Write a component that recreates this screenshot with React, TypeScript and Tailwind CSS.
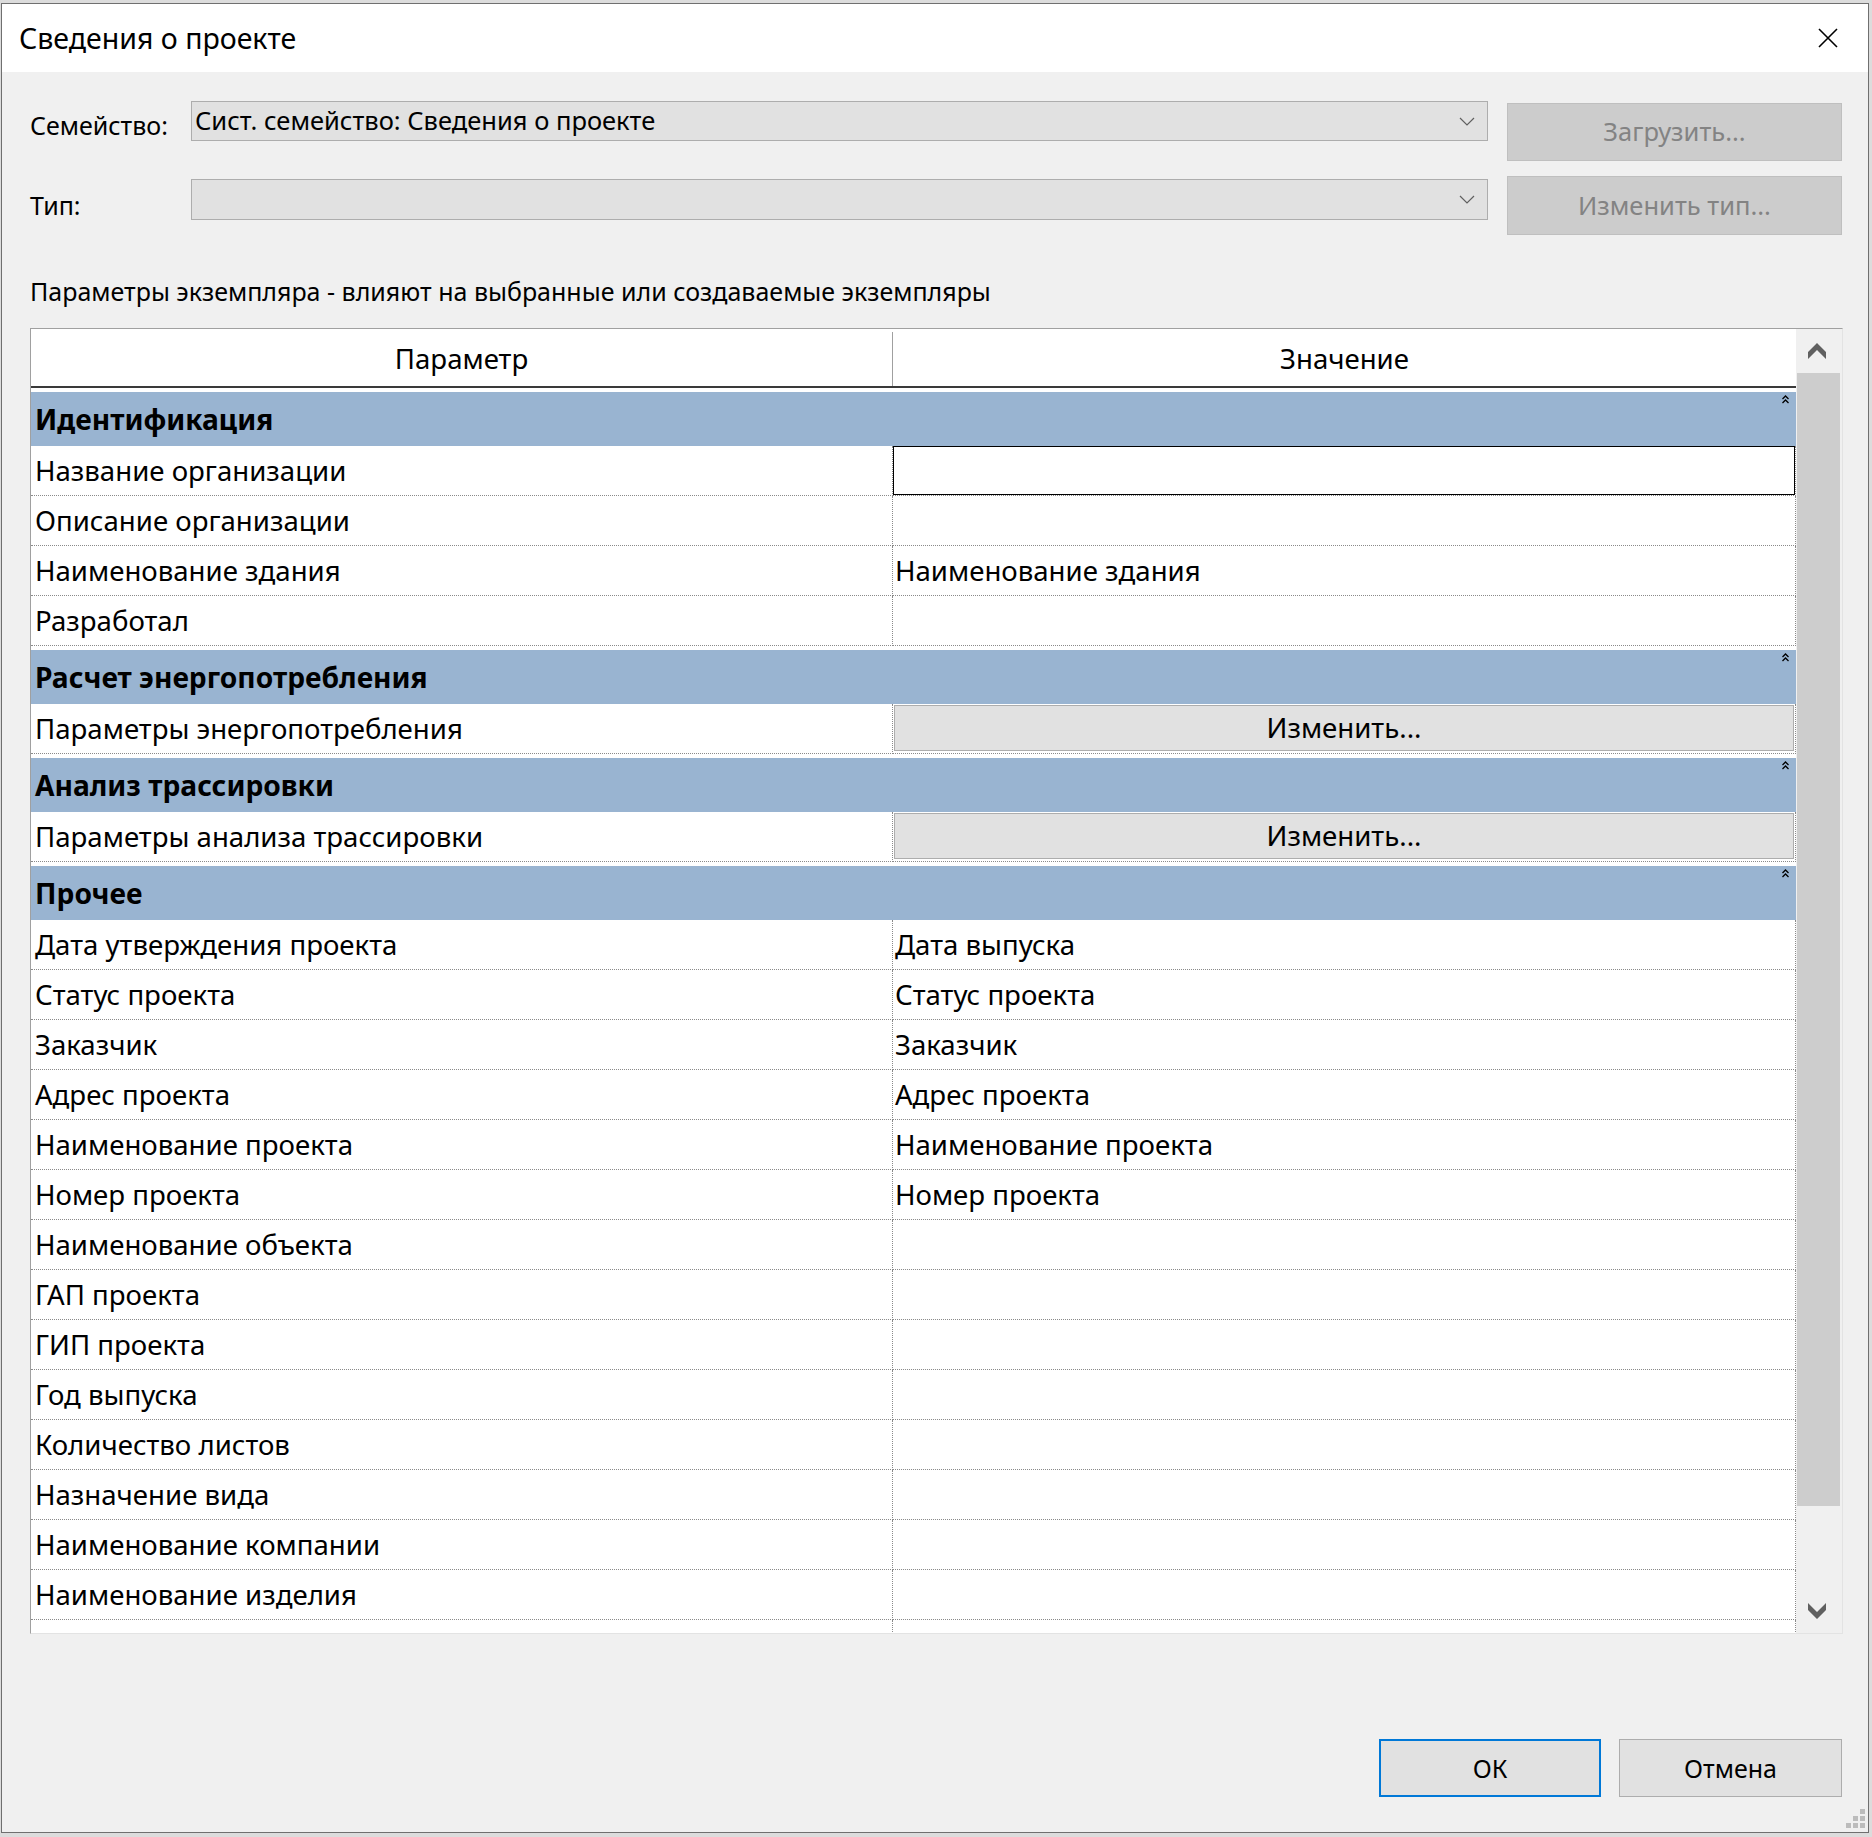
import React from 'react';

type Row = { name: string; value?: string; edit?: boolean; button?: boolean };
type Group = { title: string; rows: Row[] };

const groups: Group[] = [
  {
    title: 'Идентификация',
    rows: [
      { name: 'Название организации', edit: true },
      { name: 'Описание организации' },
      { name: 'Наименование здания', value: 'Наименование здания' },
      { name: 'Разработал' },
    ],
  },
  {
    title: 'Расчет энергопотребления',
    rows: [{ name: 'Параметры энергопотребления', button: true }],
  },
  {
    title: 'Анализ трассировки',
    rows: [{ name: 'Параметры анализа трассировки', button: true }],
  },
  {
    title: 'Прочее',
    rows: [
      { name: 'Дата утверждения проекта', value: 'Дата выпуска' },
      { name: 'Статус проекта', value: 'Статус проекта' },
      { name: 'Заказчик', value: 'Заказчик' },
      { name: 'Адрес проекта', value: 'Адрес проекта' },
      { name: 'Наименование проекта', value: 'Наименование проекта' },
      { name: 'Номер проекта', value: 'Номер проекта' },
      { name: 'Наименование объекта' },
      { name: 'ГАП проекта' },
      { name: 'ГИП проекта' },
      { name: 'Год выпуска' },
      { name: 'Количество листов' },
      { name: 'Назначение вида' },
      { name: 'Наименование компании' },
      { name: 'Наименование изделия' },
    ],
  },
];

function Chevron() {
  return (
    <svg width="16" height="9" viewBox="0 0 16 9" className="text-[#606060]">
      <path d="M1 1 L8 8 L15 1" fill="none" stroke="currentColor" strokeWidth="1.2" />
    </svg>
  );
}

function Collapse() {
  return (
    <svg width="7" height="9" viewBox="0 0 7 9" className="mt-[3px] mr-[7px]">
      <path d="M0.5 4 L3.5 1 L6.5 4 M0.5 8 L3.5 5 L6.5 8" fill="none" stroke="#000" strokeWidth="1.3" />
    </svg>
  );
}

function ScrollArrow({ down }: { down?: boolean }) {
  return (
    <svg width="18" height="16" viewBox="0 0 18 16" className={down ? 'rotate-180' : ''}>
      <polygon points="9,0 18,9 18,16 9,7 0,16 0,9" fill="#606060" />
    </svg>
  );
}

function TableRow({ row }: { row: Row }) {
  return (
    <div className="flex h-[50px] bg-white">
      <div className="w-[862px] flex items-center pl-[4px] border-b border-r border-dotted border-[#8a8a8a]">
        {row.name}
      </div>
      <div className="flex-1 flex border-b border-r border-dotted border-[#8a8a8a]">
        {row.edit ? (
          <div className="flex-1 border border-black bg-white" />
        ) : row.button ? (
          <div className="flex-1 m-[1px] mb-[2px] bg-[#e1e1e1] border border-[#adadad] flex items-center justify-center">
            Изменить...
          </div>
        ) : (
          <div className="flex-1 flex items-center pl-[2px]">{row.value}</div>
        )}
      </div>
    </div>
  );
}

export default function App() {
  return (
    <div className="w-[1872px] h-[1837px] bg-[#dcdcdc] pt-[3px] pl-[1px] font-['Noto_Sans',sans-serif] text-[25px] text-black leading-none overflow-hidden">
      <div className="w-[1868px] h-[1830px] border border-[#6f6f6f] bg-[#f0f0f0] flex flex-col relative">
        {/* title bar */}
        <div className="h-[68px] bg-white flex items-center justify-between pl-[17px] pr-[30px] shrink-0">
          <span className="text-[28.5px]">Сведения о проекте</span>
          <svg width="20" height="20" viewBox="0 0 20 20">
            <path d="M1 1 L19 19 M19 1 L1 19" stroke="#000" strokeWidth="1.6" />
          </svg>
        </div>

        <div className="flex-1 flex flex-col pl-[28px] pr-[26px]">
          {/* family row */}
          <div className="flex items-start mt-[29px]">
            <div className="w-[161px] h-[40px] mt-[4px] flex items-center">Семейство:</div>
            <div className="flex-1 h-[40px] bg-[#e1e1e1] border border-[#adadad] flex items-center justify-between pl-[3px] pr-[12px] text-[25.5px]">
              <span>Сист. семейство: Сведения о проекте</span>
              <Chevron />
            </div>
            <div className="w-[335px] ml-[19px] mt-[2px] h-[58px] bg-[#cccccc] border border-[#bfbfbf] flex items-center justify-center text-[#838383] text-[25.5px]">
              Загрузить...
            </div>
          </div>

          {/* type row */}
          <div className="flex items-start mt-[15px]">
            <div className="w-[161px] h-[40px] mt-[9px] flex items-center">Тип:</div>
            <div className="flex-1 h-[41px] mt-[3px] bg-[#e1e1e1] border border-[#adadad] flex items-center justify-end pr-[12px]">
              <Chevron />
            </div>
            <div className="w-[335px] ml-[19px] h-[59px] bg-[#cccccc] border border-[#bfbfbf] flex items-center justify-center text-[#838383] text-[25.5px]">
              Изменить тип...
            </div>
          </div>

          <div className="h-[30px] mt-[41px] flex items-center">
            Параметры экземпляра - влияют на выбранные или создаваемые экземпляры
          </div>

          {/* property grid */}
          <div className="mt-[22px] h-[1306px] w-[1813px] border-t border-l border-[#a0a0a0] border-b border-b-[#e3e3e3] border-r border-r-[#e3e3e3] flex bg-white text-[27.6px]">
            <div className="w-[1765px] flex flex-col overflow-hidden">
              <div className="h-[59px] shrink-0 flex border-b-2 border-[#3a3a3a] pt-[3px]">
                <div className="w-[862px] flex items-center justify-center border-r border-[#a0a0a0]">Параметр</div>
                <div className="flex-1 flex items-center justify-center">Значение</div>
              </div>
              {groups.map((g) => (
                <div key={g.title} className="pt-[4px] bg-white shrink-0">
                  <div className="h-[54px] bg-[#99b4d1] flex justify-between items-start">
                    <span className="self-center pl-[4px] font-bold text-[28.2px]">{g.title}</span>
                    <Collapse />
                  </div>
                  {g.rows.map((r) => (
                    <TableRow key={r.name} row={r} />
                  ))}
                </div>
              ))}
              <div className="h-[50px] shrink-0 flex">
                <div className="w-[862px] border-r border-dotted border-[#8a8a8a]" />
                <div className="flex-1 border-r border-dotted border-[#8a8a8a]" />
              </div>
            </div>
            <div className="flex-1 bg-[#f0f0f0] flex flex-col pl-[1px]">
              <div className="h-[44px] flex items-center pl-[11px]">
                <ScrollArrow />
              </div>
              <div className="flex-1 pr-[2px]">
                <div className="h-[1133px] bg-[#cdcdcd]" />
              </div>
              <div className="h-[44px] flex items-center pl-[11px]">
                <ScrollArrow down />
              </div>
            </div>
          </div>

          {/* dialog buttons */}
          <div className="mt-[105px] flex justify-end gap-[18px]">
            <div className="w-[222px] h-[58px] bg-[#e1e1e1] border-2 border-[#0078d7] flex items-center justify-center">
              ОК
            </div>
            <div className="w-[223px] h-[58px] bg-[#e1e1e1] border border-[#adadad] flex items-center justify-center">
              Отмена
            </div>
          </div>
        </div>

        {/* size grip */}
        <div className="absolute right-[3px] bottom-[4px] grid grid-cols-3 gap-[2px]">
          <span className="w-[5px] h-[5px]" />
          <span className="w-[5px] h-[5px]" />
          <span className="w-[5px] h-[5px] bg-[#bcbcbc]" />
          <span className="w-[5px] h-[5px]" />
          <span className="w-[5px] h-[5px] bg-[#bcbcbc]" />
          <span className="w-[5px] h-[5px] bg-[#bcbcbc]" />
          <span className="w-[5px] h-[5px] bg-[#bcbcbc]" />
          <span className="w-[5px] h-[5px] bg-[#bcbcbc]" />
          <span className="w-[5px] h-[5px] bg-[#bcbcbc]" />
        </div>
      </div>
    </div>
  );
}
